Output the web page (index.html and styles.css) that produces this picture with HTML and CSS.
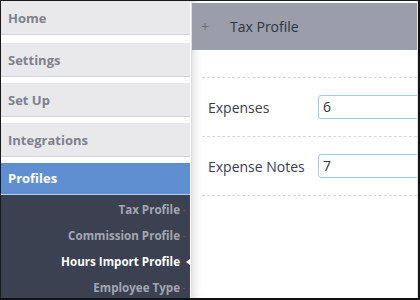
FILE: index.html
```html
<!DOCTYPE html>
<html>
<head>
<meta charset="utf-8">
<link rel="stylesheet" href="styles.css">
</head>
<body>
<div class="frame">
  <nav class="sidebar">
    <div class="item home">Home</div>
    <div class="item">Settings</div>
    <div class="item">Set Up</div>
    <div class="item">Integrations</div>
    <div class="item active">Profiles</div>
    <ul class="submenu">
      <li>Tax Profile</li>
      <li>Commission Profile</li>
      <li class="current">Hours Import Profile</li>
      <li>Employee Type</li>
    </ul>
  </nav>
  <main class="panel">
    <header class="panel-head">
      <span class="plus">+</span>
      <span class="title">Tax Profile</span>
    </header>
    <div class="form">
      <div class="spacer"></div>
      <div class="row">
        <label class="label">Expenses</label>
        <div class="input">6</div>
      </div>
      <div class="row">
        <label class="label">Expense Notes</label>
        <div class="input">7</div>
      </div>
    </div>
  </main>
</div>
</body>
</html>
```
FILE: styles.css
```css
* { box-sizing: border-box; }
html, body { margin: 0; padding: 0; background: #fff; }
body { font-family: "Open Sans", "DejaVu Sans", sans-serif; }

.frame {
  width: 420px;
  height: 300px;
  border-top: 1px solid #1a1a1a;
  border-left: 1px solid #1a1a1a;
  border-right: 2px solid #111;
  border-bottom: 2px solid #111;
  display: flex;
  overflow: hidden;
  background: #fff;
}

.sidebar {
  width: 189px;
  flex: none;
  background: #fff;
  display: flex;
  flex-direction: column;
}

.item {
  height: 34px;
  line-height: 34px;
  background: #e9e8eb;
  border-bottom: 1px solid #d3d2d6;
  margin-bottom: 6px;
  padding-left: 7px;
  font-size: 13px;
  font-weight: 700;
  color: #7f808d;
}
.item.home { margin-bottom: 8px; }

.item.active {
  height: 32px;
  line-height: 31px;
  background: #5f8fd0;
  color: #fff;
  border-bottom: 1px solid #b9cbe3;
  margin-bottom: 0;
}

.submenu {
  list-style: none;
  margin: 0;
  padding: 2px 0 0;
  flex: 1;
  background: #3b4151;
}
.submenu li {
  position: relative;
  height: 26px;
  line-height: 26px;
  text-align: right;
  padding-right: 10px;
  font-size: 11.6px;
  font-weight: 700;
  color: #a3a7b3;
}
.submenu li::after {
  content: "";
  position: absolute;
  right: 5px;
  top: 13px;
  width: 2px;
  height: 1px;
  background: #565b69;
}
.submenu li.current { color: #fff; }
.submenu li.current::after {
  right: 0;
  top: 10px;
  width: 0;
  height: 0;
  background: none;
  border-top: 3px solid transparent;
  border-bottom: 3px solid transparent;
  border-right: 4px solid #fff;
}

.panel {
  flex: 1;
  margin-left: 1px;
  border-left: 1px solid #dcdde1;
  border-right: 1px solid #e2e2e4;
  background: #fff;
  box-shadow: inset 7px 0 8px -5px rgba(0,0,0,0.14);
  padding-top: 2px;
  overflow: hidden;
  display: flex;
  flex-direction: column;
}

.panel-head {
  height: 47px;
  background: #9a9eab;
  display: flex;
  align-items: center;
  padding-left: 9px;
}
.plus {
  width: 29px;
  font-size: 14px;
  color: #6a6e7c;
}
.title {
  font-size: 14px;
  color: #2f3341;
}

.form {
  padding-left: 10px;
}
.spacer {
  height: 28px;
  border-bottom: 1px dashed #d8d8d8;
}
.row {
  height: 59px;
  display: flex;
  align-items: center;
  border-bottom: 1px dashed #d8d8d8;
  padding-left: 6px;
}
.label {
  width: 110px;
  flex: none;
  font-size: 14px;
  color: #3b3c4c;
}
.input {
  width: 140px;
  flex: none;
  height: 24px;
  line-height: 22px;
  border: 1px solid #a9c9e3;
  border-radius: 3px;
  padding-left: 4px;
  font-size: 14px;
  color: #2f3341;
}
```
